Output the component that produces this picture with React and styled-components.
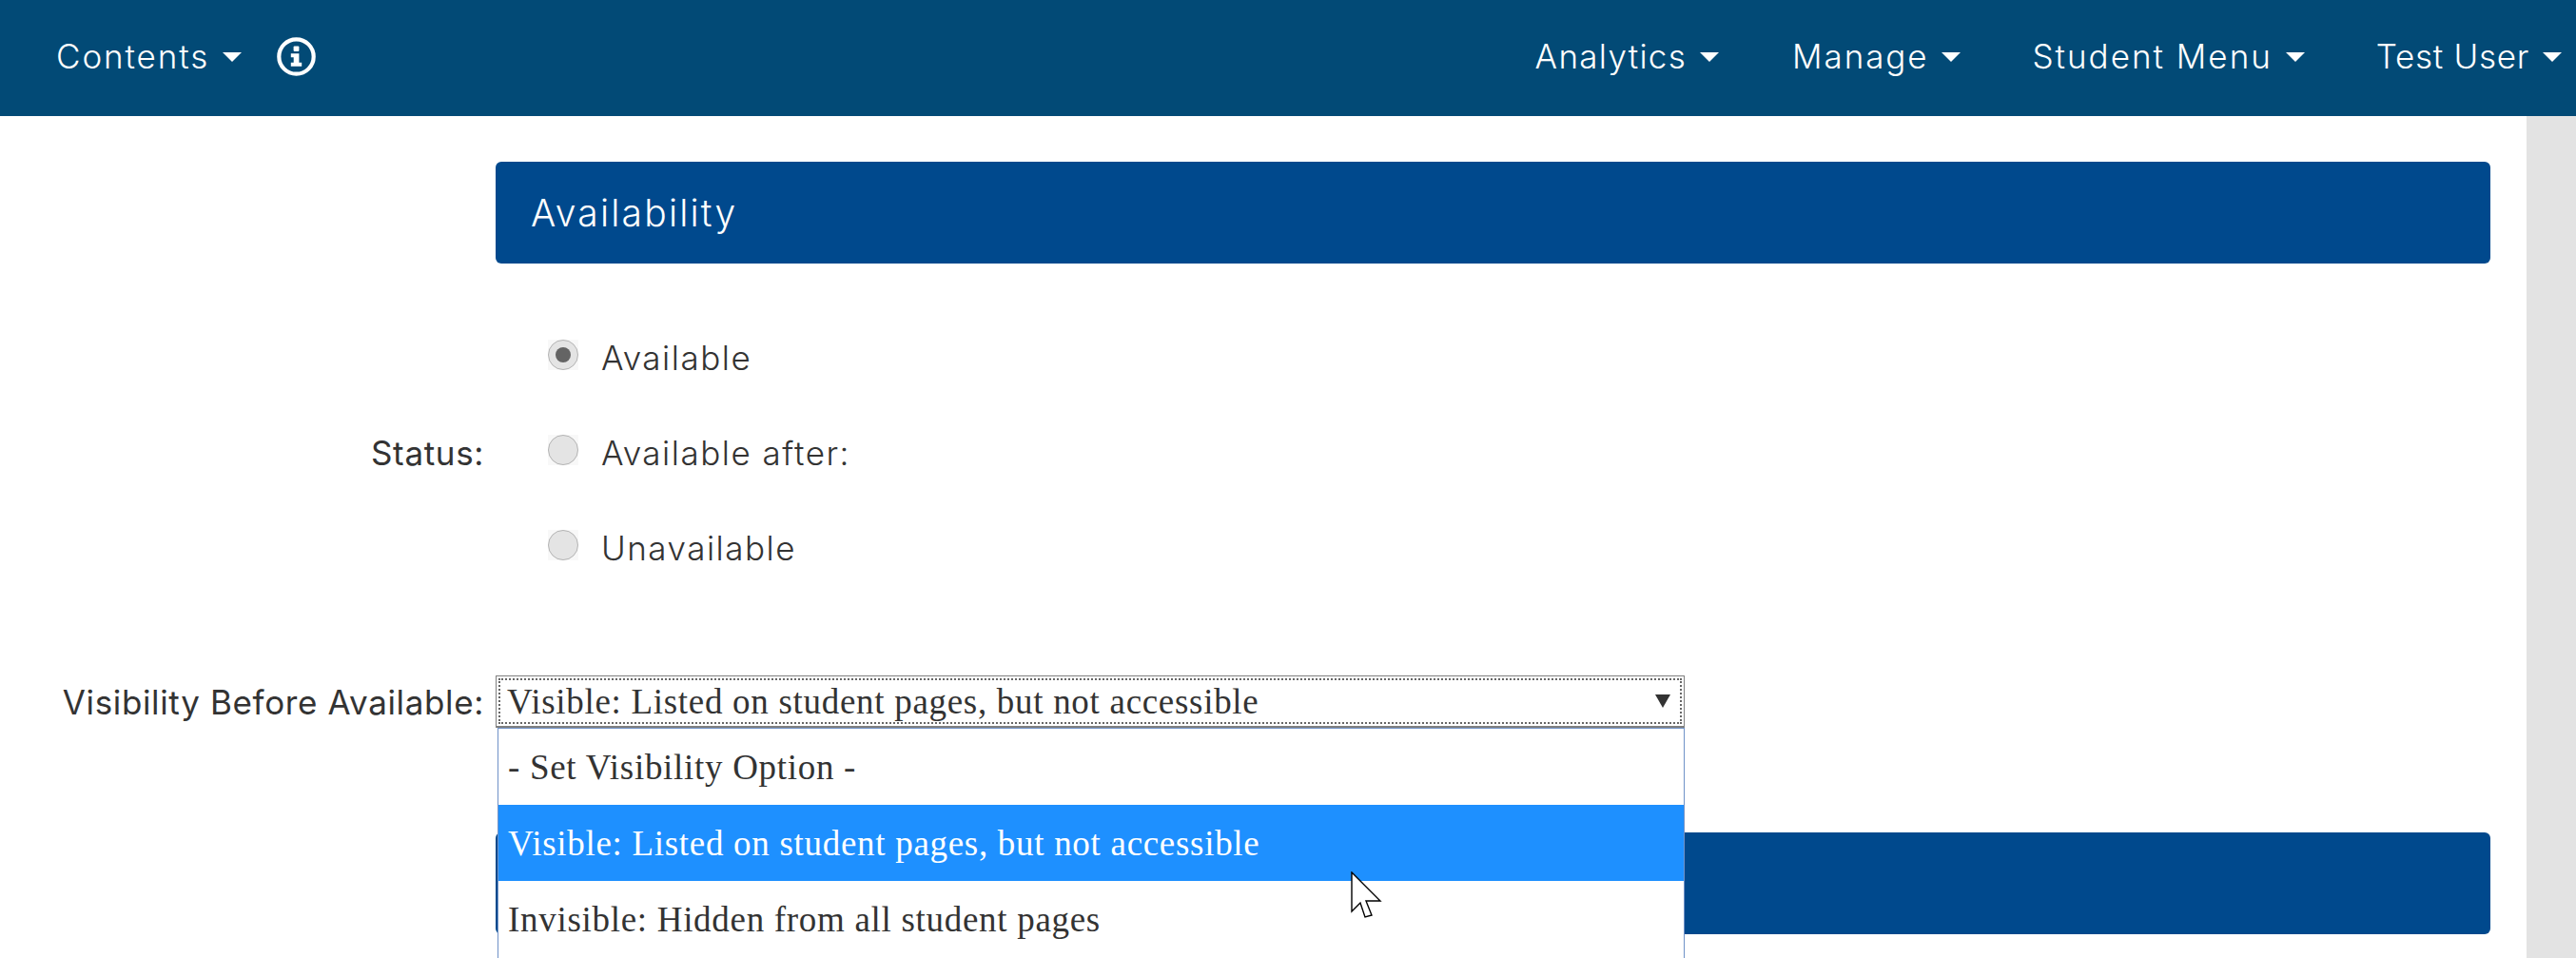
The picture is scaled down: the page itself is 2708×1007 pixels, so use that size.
import styled, { createGlobalStyle } from "styled-components";

const GlobalStyle = createGlobalStyle`
  html, body {
    margin: 0;
    padding: 0;
    background: #fff;
    overflow: hidden;
  }
  * {
    box-sizing: border-box;
  }
`;

const SANS = `"Inter", "Liberation Sans", sans-serif`;
const SERIF = `"Liberation Serif", serif`;

const NAV_RIGHT = [
  { label: "Analytics", track: 1.3, next: 77 },
  { label: "Manage", track: 1.9, next: 75 },
  { label: "Student Menu", track: 2, next: 75 },
  { label: "Test User", track: 0.7, next: 0 },
];

const STATUS_OPTIONS = ["Available", "Available after:", "Unavailable"];

const VISIBILITY_OPTIONS = [
  "- Set Visibility Option -",
  "Visible: Listed on student pages, but not accessible",
  "Invisible: Hidden from all student pages",
];

const App = () => {
  return (
    <Page>
      <GlobalStyle />
      <Navbar>
        <NavGroup>
          <NavItem>
            <NavText $track={1.9}>Contents</NavText>
            <Caret />
          </NavItem>
          <InfoIcon viewBox="0 0 41 41">
            <circle cx="20.5" cy="20.5" r="18.2" fill="none" stroke="#fff" strokeWidth="4.2" />
            <rect x="17.6" y="9.5" width="5.8" height="5.4" rx="1" fill="#fff" />
            <path d="M14.8 17.2h8.6v9.6h2.8v4H14.8v-4h2.9v-5.6h-2.9z" fill="#fff" />
          </InfoIcon>
        </NavGroup>
        <NavGroup>
          {NAV_RIGHT.map((item) => (
            <NavItem key={item.label} $after={item.next}>
              <NavText $track={item.track}>{item.label}</NavText>
              <Caret />
            </NavItem>
          ))}
        </NavGroup>
      </Navbar>

      <Body>
        <Main>
          <FormRow>
            <div />
            <SectionBar>Availability</SectionBar>
          </FormRow>

          <StatusRow>
            <FieldLabel $drop={8}>Status:</FieldLabel>
            <RadioList>
              {STATUS_OPTIONS.map((option, i) => (
                <RadioRow key={option}>
                  <Radio $checked={i === 0} />
                  <RadioLabel>{option}</RadioLabel>
                </RadioRow>
              ))}
            </RadioList>
          </StatusRow>

          <VisibilityRow>
            <FieldLabel $drop={0}>Visibility Before Available:</FieldLabel>
            <SelectWrap>
              <SelectBox>
                <SelectFocus>
                  <SelectValue>{VISIBILITY_OPTIONS[1]}</SelectValue>
                  <SelectArrow />
                </SelectFocus>
              </SelectBox>
              <Dropdown>
                {VISIBILITY_OPTIONS.map((option, i) => (
                  <Option key={option} $active={i === 1}>
                    {option}
                  </Option>
                ))}
              </Dropdown>
              <Cursor viewBox="0 0 34 50">
                <path
                  d="M1 1 L31 31 L16 31 L22 46 L15 48 L10 33 L1 42 Z"
                  fill="#fff"
                  stroke="#000"
                  strokeWidth="1.4"
                />
              </Cursor>
            </SelectWrap>
          </VisibilityRow>

          <SecondRow>
            <div />
            <SectionBar />
          </SecondRow>
        </Main>
        <Scrollbar />
      </Body>
    </Page>
  );
};

const Page = styled.div`
  width: 2708px;
  height: 1007px;
  display: flex;
  flex-direction: column;
  overflow: hidden;
  font-family: ${SANS};
`;

const Navbar = styled.nav`
  height: 122px;
  flex-shrink: 0;
  display: flex;
  justify-content: space-between;
  align-items: center;
  padding: 0 15px 4px 59px;
  background: #024a76;
  color: #fff;
`;

const NavGroup = styled.div`
  display: flex;
  align-items: center;
`;

const NavItem = styled.div`
  display: flex;
  align-items: center;
  gap: 14px;
  margin-right: ${(p) => p.$after || 0}px;
`;

const NavText = styled.span`
  font-size: 35px;
  font-weight: 300;
  line-height: 40px;
  letter-spacing: ${(p) => p.$track}px;
`;

const Caret = styled.span`
  width: 0;
  height: 0;
  margin-top: 2px;
  border-left: 10px solid transparent;
  border-right: 10px solid transparent;
  border-top: 10px solid #fff;
`;

const InfoIcon = styled.svg`
  width: 41px;
  height: 41px;
  margin-left: 37px;
`;

const Body = styled.div`
  flex: 1;
  min-height: 0;
  display: flex;
`;

const Main = styled.main`
  flex: 1;
  min-width: 0;
  padding: 48px 38px 0 0;
`;

const Scrollbar = styled.div`
  width: 52px;
  background: #e3e3e3;
`;

const FormRow = styled.div`
  display: grid;
  grid-template-columns: 521px 1fr;
`;

const SectionBar = styled.h2`
  height: 107px;
  margin: 0;
  padding: 0 37px;
  display: flex;
  align-items: center;
  border-radius: 6px;
  background: #00498d;
  color: #fff;
  font-size: 39px;
  font-weight: 300;
  letter-spacing: 2.2px;
`;

const StatusRow = styled(FormRow)`
  margin-top: 45px;
  align-items: center;
`;

const FieldLabel = styled.label`
  padding: ${(p) => p.$drop}px 12px 0 0;
  text-align: right;
  color: #333;
  font-size: 35px;
  font-weight: 400;
  line-height: 40px;
  letter-spacing: 0.65px;
`;

const RadioList = styled.div`
  display: flex;
  flex-direction: column;
  padding-left: 55px;
`;

const RadioRow = styled.div`
  height: 100px;
  display: flex;
  align-items: center;
  gap: 24px;
`;

const Radio = styled.span`
  position: relative;
  width: 32px;
  height: 32px;
  margin-top: 1px;
  background: #f8f8f8;

  &::before {
    content: "";
    position: absolute;
    inset: 0;
    border-radius: 50%;
    border: 1.5px solid #b4b4b4;
    background: #e4e4e4;
  }

  &::after {
    content: "";
    display: ${(p) => (p.$checked ? "block" : "none")};
    position: absolute;
    top: 8px;
    left: 8px;
    width: 16px;
    height: 16px;
    border-radius: 50%;
    background: #646464;
  }
`;

const RadioLabel = styled.span`
  padding-top: 8px;
  color: #333;
  font-size: 35px;
  font-weight: 300;
  line-height: 40px;
  letter-spacing: 1.5px;
`;

const VisibilityRow = styled(FormRow)`
  margin-top: 88px;
  align-items: center;
`;

const SelectWrap = styled.div`
  position: relative;
  width: 1250px;
  height: 55px;
`;

const SelectBox = styled.div`
  height: 100%;
  padding: 2px;
  border: 1px solid #808080;
  border-bottom-width: 2px;
  background: #fff;
`;

const SelectFocus = styled.div`
  height: 100%;
  display: flex;
  align-items: center;
  justify-content: space-between;
  padding: 0 10px 0 7px;
  border: 2px dotted #666;
`;

const SelectValue = styled.span`
  padding-top: 2px;
  color: #333;
  font-family: ${SERIF};
  font-size: 37px;
  line-height: 40px;
  letter-spacing: 0.7px;
`;

const SelectArrow = styled.span`
  width: 0;
  height: 0;
  border-left: 8px solid transparent;
  border-right: 8px solid transparent;
  border-top: 14px solid #333;
`;

const Dropdown = styled.ul`
  position: absolute;
  top: 100%;
  left: 2px;
  right: 0;
  height: 300px;
  margin: 0;
  padding: 0;
  list-style: none;
  background: #fff;
  border-left: 1px solid #7092c8;
  border-right: 1px solid #7092c8;
  border-top: 1px solid #7092c8;
  z-index: 2;
`;

const Option = styled.li`
  height: 80px;
  display: flex;
  align-items: center;
  padding-left: 10px;
  font-family: ${SERIF};
  font-size: 37px;
  letter-spacing: 0.7px;
  color: ${(p) => (p.$active ? "#fff" : "#333")};
  background: ${(p) => (p.$active ? "#1e90ff" : "transparent")};
`;

const Cursor = styled.svg`
  position: absolute;
  left: 899px;
  top: 206px;
  width: 34px;
  height: 50px;
  z-index: 3;
`;

const SecondRow = styled(FormRow)`
  margin-top: 110px;
`;

export default App;
